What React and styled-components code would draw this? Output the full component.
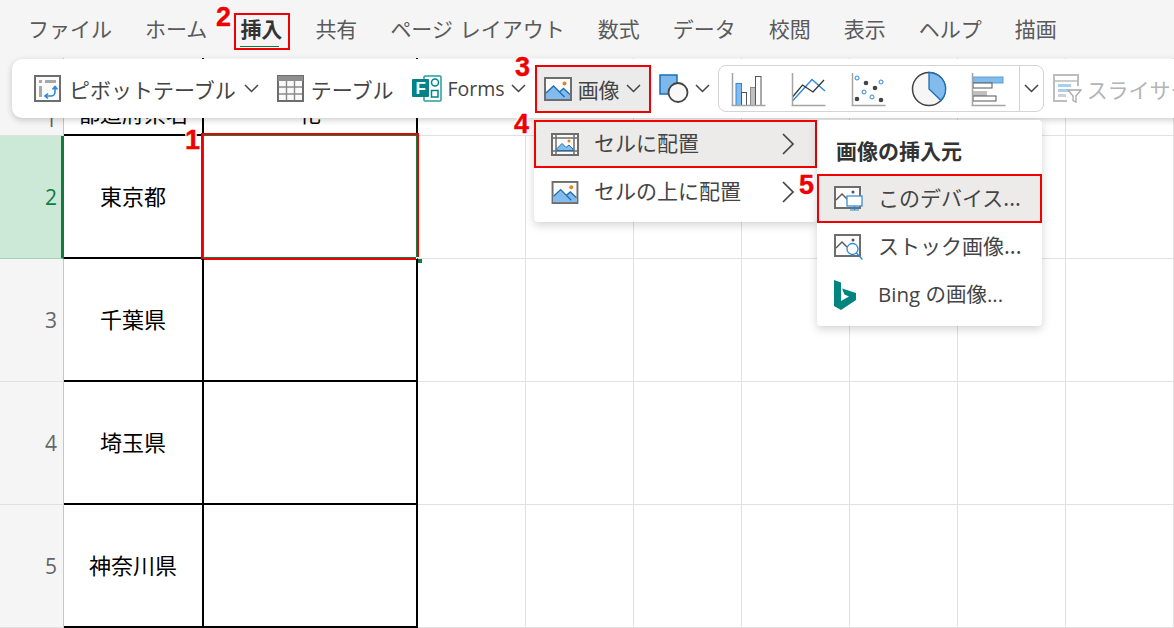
import React from 'react';
import styled, { createGlobalStyle } from 'styled-components';

const GlobalStyle = createGlobalStyle`
    html, body {
        margin: 0;
        padding: 0;
        background: #fff;
    }
    body {
        font-family: "Noto Sans CJK JP", "Liberation Sans", sans-serif;
    }
`;

const RED = '#f00000';
const TABS = ['ファイル', 'ホーム', '挿入', '共有', 'ページ レイアウト', '数式', 'データ', '校閲', '表示', 'ヘルプ', '描画'];
const ROWS = [
    { num: 2, name: '東京都', active: true },
    { num: 3, name: '千葉県' },
    { num: 4, name: '埼玉県' },
    { num: 5, name: '神奈川県' },
];

const Page = styled.div`
    position: relative;
    width: 1174px;
    height: 628px;
    overflow: hidden;
    background: #fff;
`;

const MenuBar = styled.div`
    display: flex;
    align-items: center;
    gap: 33px;
    box-sizing: border-box;
    height: 58px;
    padding: 0 0 2px 28px;
    background: #f5f5f5;
`;

const Tab = styled.div`
    position: relative;
    font-size: 21px;
    line-height: 30px;
    color: ${p => p.$active ? '#333' : '#5a5a5a'};
    font-weight: ${p => p.$active ? 700 : 400};
    word-spacing: 2px;
    white-space: nowrap;
    &::before {
        content: ${p => p.$active ? '""' : 'none'};
        position: absolute;
        left: 0;
        right: 3px;
        bottom: -4px;
        height: 1px;
        background: #107c41;
    }
    &::after {
        content: ${p => p.$active ? '""' : 'none'};
        position: absolute;
        left: -6px;
        right: -8px;
        top: 0;
        bottom: -7px;
        border: 2px solid ${RED};
    }
`;

const Ribbon = styled.div`
    position: absolute;
    left: 12px;
    top: 59px;
    width: 1200px;
    height: 59px;
    padding-left: 22px;
    box-sizing: border-box;
    display: flex;
    align-items: center;
    background: #fff;
    border-radius: 10px;
    box-shadow: 0 2px 6px rgba(0, 0, 0, 0.2);
    color: #444;
    font-size: 21px;
    white-space: nowrap;
`;

const RibbonItem = styled.div`
    display: flex;
    align-items: center;
    gap: ${p => p.$gap ?? 8}px;
    margin-right: ${p => p.$after ?? 0}px;
    flex: none;
`;

const FormsLabel = styled.span`
    font-family: "Open Sans", sans-serif;
    font-size: 19.5px;
`;

const PictureButton = styled(RibbonItem)`
    box-sizing: border-box;
    height: 48px;
    width: 116px;
    padding-left: 7px;
    background: #ebebeb;
    border: 2px solid ${RED};
`;

const ChartGroup = styled.div`
    display: flex;
    align-items: center;
    box-sizing: border-box;
    width: 326px;
    height: 47px;
    padding-left: 12px;
    margin-right: 9px;
    flex: none;
    background: #fff;
    border: 1px solid #d4d4d4;
    border-radius: 8px;
`;

const ChartSlot = styled.div`
    display: flex;
    width: 60px;
    flex: none;
`;

const ChartMore = styled.div`
    display: flex;
    align-items: center;
    justify-content: center;
    align-self: stretch;
    width: 24px;
    margin-left: -12px;
    border-left: 1px solid #d4d4d4;
`;

const DisabledLabel = styled.span`
    color: #b4b4b4;
`;

const Sheet = styled.div`
    display: grid;
    grid-template-columns: 64px 140px 214px 108px 108px 108px 108px 108px 108px 108px;
    grid-template-rows: 78px repeat(4, 123px);
`;

const RowHead = styled.div`
    box-sizing: border-box;
    display: flex;
    align-items: ${p => p.$clipped ? 'flex-end' : 'center'};
    justify-content: flex-end;
    padding-right: ${p => p.$active ? '4px' : '6px'};
    padding-bottom: ${p => p.$clipped ? '2px' : '0'};
    font-family: "Open Sans", "Liberation Sans", sans-serif;
    font-size: 21px;
    color: ${p => p.$active ? '#107c41' : '#666'};
    background: ${p => p.$active ? '#cbe9d6' : '#f5f5f5'};
    border-right: ${p => p.$active ? '3px solid #107c41' : '1px solid #c6c6c6'};
    border-bottom: 1px solid ${p => p.$active ? '#9fd5b6' : '#e1e1e1'};
`;

const Cell = styled.div`
    position: relative;
    box-sizing: border-box;
    display: flex;
    align-items: center;
    justify-content: center;
    padding-bottom: 4px;
    font-size: 22px;
    color: #000;
    border-right: ${p => p.$boxed ? '2px solid #000' : '1px solid #e1e1e1'};
    border-bottom: ${p => p.$boxed ? '2px solid #000' : '1px solid #e1e1e1'};
`;

const HeaderCell = styled(Cell)`
    align-items: flex-end;
    line-height: 30px;
    padding-bottom: 7px;
`;

const Selection = styled.div`
    position: absolute;
    left: -3px;
    right: -3px;
    top: -3px;
    bottom: -3px;
    border: 2px solid ${RED};
    box-shadow: inset 0 0 0 1px #107c41;
`;

const FillHandle = styled.span`
    position: absolute;
    right: -5px;
    bottom: -5px;
    width: 5px;
    height: 5px;
    background: #107c41;
    border: 1px solid #fff;
    border-width: 1px 0 0 1px;
`;

const Flyout = styled.div`
    position: absolute;
    left: ${p => p.$left}px;
    top: 120px;
    width: ${p => p.$width}px;
    height: ${p => p.$height}px;
    box-sizing: border-box;
    background: #fff;
    border-radius: 4px;
    box-shadow: 0 3px 10px rgba(0, 0, 0, 0.18);
    color: #444;
    font-size: 21px;
    white-space: nowrap;
`;

const MenuRow = styled.div`
    display: flex;
    align-items: center;
    box-sizing: border-box;
    height: ${p => p.$height ?? 48}px;
    padding-left: ${p => p.$pad ?? 15}px;
    background: ${p => p.$picked ? '#edebe9' : 'transparent'};
    border: ${p => p.$picked ? `2px solid ${RED}` : '2px solid transparent'};
`;

const MenuIcon = styled.span`
    display: flex;
    justify-content: flex-start;
    width: ${p => p.$width ?? 44}px;
    flex: none;
`;

const MenuLabel = styled.span`
    flex: ${p => p.$fill ? 1 : 'none'};
    margin-top: -4px;
`;

const Arrow = styled.span`
    display: flex;
    margin-right: 20px;
`;

const FlyoutTitle = styled.div`
    height: 54px;
    padding: 14px 0 0 19px;
    box-sizing: border-box;
    font-size: 21px;
    font-weight: 700;
    line-height: 32px;
    color: #333;
`;

const LatinLabel = styled(MenuLabel)`
    font-family: "Open Sans", "Noto Sans CJK JP", sans-serif;
    font-size: 20.5px;
`;

const Marker = styled.span`
    position: absolute;
    left: ${p => p.$x}px;
    top: ${p => p.$y}px;
    font-family: "Liberation Sans", sans-serif;
    font-size: 27px;
    font-weight: 700;
    line-height: 27px;
    color: ${RED};
    -webkit-text-stroke: 0.4px ${RED};
    text-shadow: 1.5px 0 0 #fff, -1.5px 0 0 #fff, 0 1.5px 0 #fff, 0 -1.5px 0 #fff, 1px 1px 0 #fff, -1px -1px 0 #fff, 1px -1px 0 #fff, -1px 1px 0 #fff;
`;

const Svg = styled.svg`
    display: block;
    flex: none;
`;

const Chevron = ({ size = 15, color = '#444' }) => (
    <Svg width={size} height={size * 0.6} viewBox="0 0 15 9" fill="none">
        <path d="M1 1l6.5 6.5L14 1" stroke={color} strokeWidth="1.5" />
    </Svg>
);

const ChevronRight = () => (
    <Svg width="14" height="22" viewBox="0 0 14 22" fill="none">
        <path d="M2 1l10 10L2 21" stroke="#444" strokeWidth="1.7" />
    </Svg>
);

const PivotIcon = () => (
    <Svg width="27" height="27" viewBox="0 0 27 27" fill="none">
        <rect x="1" y="1" width="25" height="25" fill="#fafafa" stroke="#6d6d6d" strokeWidth="2" />
        <rect x="11" y="5" width="11" height="3" fill="#a8a8a8" />
        <rect x="5" y="5" width="3" height="3" fill="#a8a8a8" />
        <rect x="5" y="11" width="3" height="11" fill="#a8a8a8" />
        <path d="M12 21h5a4 4 0 0 0 4-4v-5M18.500 14.500L21 11.500l2.500 3M14 18.500L11 21l3 2.500" stroke="#2b88d8" strokeWidth="1.6" />
    </Svg>
);

const TableIcon = () => (
    <Svg width="27" height="27" viewBox="0 0 27 27" fill="none">
        <rect x="1" y="1" width="25" height="25" fill="#fafafa" stroke="#6d6d6d" strokeWidth="2" />
        <rect x="1" y="1" width="25" height="5" fill="#8e8e8e" />
        <path d="M9.500 6v19M17.500 6v19M2 12h23M2 19h23" stroke="#8a8a8a" strokeWidth="1.4" />
    </Svg>
);

const FormsIcon = () => (
    <Svg width="30" height="27" viewBox="0 0 30 27" fill="none">
        <rect x="12" y="1" width="17" height="25" rx="1" fill="#fff" stroke="#2a9a9c" strokeWidth="1.5" />
        <circle cx="23" cy="7.500" r="3.500" stroke="#038387" strokeWidth="1.500" />
        <rect x="19.500" y="15.500" width="6.500" height="6.500" stroke="#038387" strokeWidth="1.500" />
        <rect x="0" y="4" width="17" height="18" rx="1" fill="#038387" />
        <text x="3.500" y="19" fontFamily="Liberation Sans, sans-serif" fontWeight="700" fontSize="17" fill="#fff">F</text>
    </Svg>
);

const PictureIcon = ({ width = 28, height = 24 }) => (
    <Svg width={width} height={height} viewBox="0 0 28 24" fill="none">
        <rect x="1" y="1" width="26" height="22" fill="#fbfbfb" stroke="#6d6d6d" strokeWidth="2" />
        <path d="M2 21v-5l7.500-7 6 6 4-3.500 6.500 6V22H2z" fill="#83bbec" />
        <path d="M2 16l7.500-7 11 11M15.500 15l4-3.500 6.500 6" stroke="#1f6fb5" strokeWidth="1.400" />
        <circle cx="20.500" cy="6.500" r="2" fill="#e8821e" />
    </Svg>
);

const PlaceInCellIcon = () => (
    <Svg width="28" height="23" viewBox="0 0 28 23" fill="none">
        <rect x="1" y="1" width="26" height="21" fill="#fbfbfb" stroke="#6d6d6d" strokeWidth="2" />
        <path d="M5 2v19M23 2v19M2 5h24M2 18h24" stroke="#6d6d6d" strokeWidth="1.500" />
        <path d="M6 17.500v-2l5-5 4 4 3-2.500 4 4v1.500z" fill="#83bbec" stroke="#1f6fb5" strokeWidth="1" />
        <circle cx="18" cy="8" r="1.500" fill="#e8821e" />
    </Svg>
);

const ShapesIcon = () => (
    <Svg width="30" height="29" viewBox="0 0 30 29" fill="none">
        <rect x="1" y="1" width="17" height="19" fill="#7db8ea" stroke="#1a6fb7" strokeWidth="1.500" />
        <circle cx="19" cy="18.500" r="9.500" fill="#f8f8f8" stroke="#444" strokeWidth="1.800" />
    </Svg>
);

const Axis = () => <path d="M1.500 2v33M0.500 34.500h34" stroke="#a5a5a5" strokeWidth="1.500" fill="none" />;

const ColumnChartIcon = () => (
    <Svg width="36" height="36" viewBox="0 0 36 36" fill="none">
        <rect x="5" y="12.500" width="5.500" height="22" fill="#83bbec" stroke="#2b88d8" />
        <rect x="10.500" y="21.500" width="5" height="13" fill="#fff" stroke="#555" />
        <rect x="19.500" y="16.500" width="5" height="18" fill="#c0c0c0" stroke="#8a8a8a" />
        <rect x="24.500" y="5.500" width="5.500" height="29" fill="#fff" stroke="#555" />
        <Axis />
    </Svg>
);

const LineChartIcon = () => (
    <Svg width="36" height="36" viewBox="0 0 36 36" fill="none">
        <path d="M1.500 30L21 8.500 34 20" stroke="#2b88d8" strokeWidth="1.300" />
        <path d="M1.500 26L11.500 14 22 21 33 9" stroke="#333" strokeWidth="1.300" />
        <Axis />
    </Svg>
);

const ScatterIcon = () => (
    <Svg width="36" height="36" viewBox="0 0 36 36" fill="none">
        {[[6, 28], [15, 12], [24, 17], [30, 29]].map(([x, y]) => (
            <circle key={`${x}-${y}`} cx={x} cy={y} r="2.300" fill="#444" />
        ))}
        {[[6, 7], [30, 11], [13, 21], [21, 26]].map(([x, y]) => (
            <circle key={`${x}-${y}`} cx={x} cy={y} r="2" fill="#fff" stroke="#2b88d8" />
        ))}
        <Axis />
    </Svg>
);

const PieIcon = () => (
    <Svg width="36" height="36" viewBox="0 0 36 36" fill="none">
        <circle cx="18" cy="18" r="16.500" fill="#f6f6f6" stroke="#444" strokeWidth="1.500" />
        <path d="M18 1.500A16.500 16.500 0 0 1 30 29.500L18 18z" fill="#83bbec" stroke="#1a6fb7" strokeWidth="1.300" />
    </Svg>
);

const BarChartIcon = () => (
    <Svg width="36" height="36" viewBox="0 0 36 36" fill="none">
        <rect x="2" y="6" width="30" height="6" fill="#83bbec" stroke="#5b9fd8" />
        <rect x="2" y="12" width="19" height="5" fill="#fff" stroke="#555" />
        <rect x="2" y="20" width="14" height="5" fill="#c0c0c0" />
        <rect x="2" y="25" width="23" height="5" fill="#fff" stroke="#555" />
        <Axis />
    </Svg>
);

const SlicerIcon = () => (
    <Svg width="29" height="29" viewBox="0 0 29 29" fill="none">
        <path d="M14 27H1V1h24v11" stroke="#bdbdbd" strokeWidth="2" />
        <path d="M2 7h22" stroke="#bdbdbd" strokeWidth="1.500" />
        <rect x="5" y="10" width="13" height="3" fill="#a9cfee" />
        <rect x="5" y="15" width="11" height="3" fill="#a9cfee" />
        <rect x="5" y="20" width="8" height="3" fill="#d2d2d2" />
        <path d="M15 16h13l-5 6v6l-3-1.500V22z" fill="#fff" stroke="#a8a8a8" strokeWidth="1.300" />
    </Svg>
);

const FramePicture = () => (
    <>
        <rect x="1" y="1" width="25" height="21" fill="#fbfbfb" stroke="#6d6d6d" strokeWidth="2" />
        <path d="M2 14l6-6 5 5" stroke="#555" strokeWidth="1.400" />
        <circle cx="19" cy="6" r="1.500" fill="#555" />
    </>
);

const DeviceIcon = () => (
    <Svg width="29" height="25" viewBox="0 0 29 25" fill="none">
        <FramePicture />
        <rect x="13" y="10" width="15" height="10" fill="#fff" stroke="#2b88d8" strokeWidth="1.200" />
        <path d="M20.500 20v4M16 24h9" stroke="#2b88d8" strokeWidth="1.200" />
    </Svg>
);

const StockIcon = () => (
    <Svg width="29" height="27" viewBox="0 0 29 27" fill="none">
        <FramePicture />
        <circle cx="18.500" cy="15" r="5.500" fill="#fff" stroke="#2b88d8" strokeWidth="1.300" />
        <path d="M22.500 19l6 6.500" stroke="#2b88d8" strokeWidth="1.300" />
    </Svg>
);

const BingIcon = () => (
    <Svg width="22" height="30" viewBox="0 0 22 30">
        <path d="M0 0l7 2.500V21l8-4.500-4.500-2L8 8.500 22 13v7L7 30l-7-4z" fill="#00847e" />
    </Svg>
);

export default function App() {
    return (
        <Page>
            <GlobalStyle />
            <MenuBar>
                {TABS.map((tab) => (
                    <Tab key={tab} $active={tab === '挿入'}>{tab}</Tab>
                ))}
            </MenuBar>

            <Sheet>
                <RowHead $clipped>1</RowHead>
                <HeaderCell $boxed>都道府県名</HeaderCell>
                <HeaderCell $boxed>花</HeaderCell>
                {Array.from({ length: 7 }, (_, i) => <Cell key={i} />)}

                {ROWS.map((row) => (
                    <React.Fragment key={row.num}>
                        <RowHead $active={row.active}>{row.num}</RowHead>
                        <Cell $boxed>{row.name}</Cell>
                        <Cell $boxed>
                            {row.active && (
                                <Selection>
                                    <FillHandle />
                                </Selection>
                            )}
                        </Cell>
                        {Array.from({ length: 7 }, (_, i) => <Cell key={i} />)}
                    </React.Fragment>
                ))}
            </Sheet>

            <Ribbon>
                <RibbonItem $after={18}>
                    <PivotIcon />
                    <span>ピボットテーブル</span>
                    <Chevron />
                </RibbonItem>
                <RibbonItem $after={18} $gap={7}>
                    <TableIcon />
                    <span>テーブル</span>
                </RibbonItem>
                <RibbonItem $after={9} $gap={6}>
                    <FormsIcon />
                    <FormsLabel>Forms</FormsLabel>
                    <Chevron />
                </RibbonItem>
                <PictureButton as="div" $after={8} $gap={6}>
                    <PictureIcon />
                    <span>画像</span>
                    <Chevron />
                </PictureButton>
                <RibbonItem $after={8} $gap={6}>
                    <ShapesIcon />
                    <Chevron />
                </RibbonItem>
                <ChartGroup>
                    <ChartSlot><ColumnChartIcon /></ChartSlot>
                    <ChartSlot><LineChartIcon /></ChartSlot>
                    <ChartSlot><ScatterIcon /></ChartSlot>
                    <ChartSlot><PieIcon /></ChartSlot>
                    <ChartSlot><BarChartIcon /></ChartSlot>
                    <ChartMore><Chevron /></ChartMore>
                </ChartGroup>
                <RibbonItem $gap={5}>
                    <SlicerIcon />
                    <DisabledLabel>スライサー</DisabledLabel>
                </RibbonItem>
            </Ribbon>

            <Flyout $left={534} $width={283} $height={102}>
                <MenuRow $picked>
                    <MenuIcon $width={43}><PlaceInCellIcon /></MenuIcon>
                    <MenuLabel $fill>セルに配置</MenuLabel>
                    <Arrow><ChevronRight /></Arrow>
                </MenuRow>
                <MenuRow>
                    <MenuIcon $width={43}><PictureIcon width={28} height={23} /></MenuIcon>
                    <MenuLabel $fill>セルの上に配置</MenuLabel>
                    <Arrow><ChevronRight /></Arrow>
                </MenuRow>
            </Flyout>

            <Flyout $left={817} $width={225} $height={206}>
                <FlyoutTitle>画像の挿入元</FlyoutTitle>
                <MenuRow $picked $height={49}>
                    <MenuIcon><DeviceIcon /></MenuIcon>
                    <MenuLabel>このデバイス...</MenuLabel>
                </MenuRow>
                <MenuRow>
                    <MenuIcon><StockIcon /></MenuIcon>
                    <MenuLabel>ストック画像...</MenuLabel>
                </MenuRow>
                <MenuRow>
                    <MenuIcon><BingIcon /></MenuIcon>
                    <LatinLabel>Bing の画像...</LatinLabel>
                </MenuRow>
            </Flyout>

            <Marker $x={185} $y={127}>1</Marker>
            <Marker $x={216} $y={4}>2</Marker>
            <Marker $x={515} $y={54}>3</Marker>
            <Marker $x={514} $y={111}>4</Marker>
            <Marker $x={799} $y={172}>5</Marker>
        </Page>
    );
}
